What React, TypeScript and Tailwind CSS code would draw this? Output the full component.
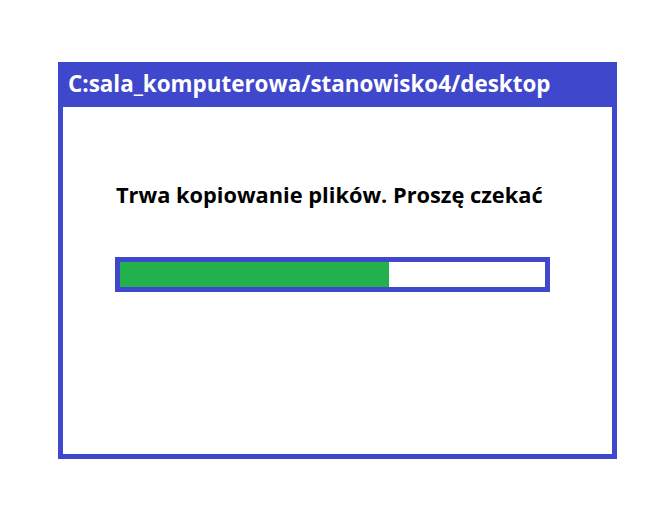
export default function App() {
  const progress = 269 / 425;
  return (
    <div className="h-[512px] w-[669px] bg-white pl-[58px] pt-[62px] [font-family:'Open_Sans','Noto_Sans',sans-serif]">
      <div className="flex h-[397px] w-[559px] flex-col border-[5px] border-[#3F48CC]">
        <div className="flex h-[40px] items-center bg-[#3F48CC] pb-[5px] pl-[5px] text-[22.4px] font-bold text-white leading-none">
          C:sala_komputerowa/stanowisko4/desktop
        </div>
        <div className="flex-1 pl-[52px]">
          <div className="mt-[77px] pl-[1px] text-[21.8px] font-bold text-black leading-none">
            Trwa kopiowanie plików. Proszę czekać
          </div>
          <div className="mt-[51px] h-[35px] w-[435px] border-[5px] border-[#3F48CC] bg-white">
            <div className="h-full bg-[#22B14C]" style={{ width: `${progress * 100}%` }} />
          </div>
        </div>
      </div>
    </div>
  );
}
